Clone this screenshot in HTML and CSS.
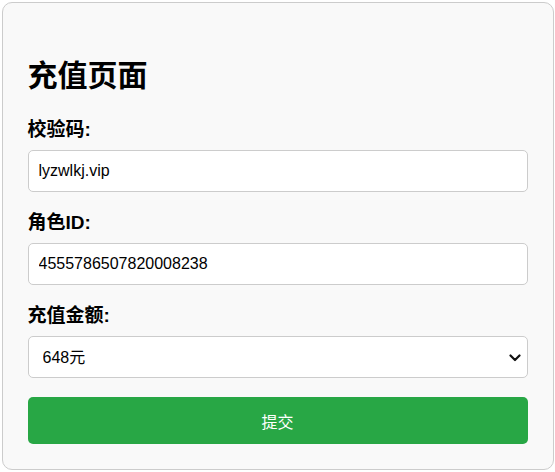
FILE: index.html
```html
<!DOCTYPE html>
<html lang="zh">
<head>
<meta charset="utf-8">
<title>充值页面</title>
<link rel="stylesheet" href="styles.css">
</head>
<body>
<div class="card">
  <h2 class="title">充值页面</h2>
  <form class="form">
    <div class="group">
      <label class="label" for="code">校验码:</label>
      <input class="field" id="code" type="text" value="lyzwlkj.vip">
    </div>
    <div class="group">
      <label class="label" for="role">角色ID:</label>
      <input class="field" id="role" type="text" value="4555786507820008238">
    </div>
    <div class="group">
      <label class="label" for="amount">充值金额:</label>
      <div class="select-wrap">
        <select class="field select" id="amount">
          <option>648元</option>
        </select>
        <svg class="chevron" width="12" height="8" viewBox="0 0 12 8"><path d="M1.5 1.5 L6 6 L10.5 1.5" fill="none" stroke="#111" stroke-width="2.2" stroke-linecap="round" stroke-linejoin="round"/></svg>
      </div>
    </div>
    <button class="submit" type="button">提交</button>
  </form>
</div>
</body>
</html>
```
FILE: styles.css
```css
html, body {
  margin: 0;
  padding: 0;
  background: #fff;
}
body {
  font-family: "Liberation Sans", Arial, "Noto Sans CJK SC", sans-serif;
  color: #000;
  padding-top: 2px;
}
.card {
  width: 500px;
  margin: 0 auto;
  padding: 25px;
  border: 1px solid #ccc;
  border-radius: 10px;
  background: #f9f9f9;
}
.title {
  font-family: "Noto Sans CJK SC", sans-serif;
  font-size: 30px;
  font-weight: 700;
  line-height: 40px;
  margin: 25px 0 24px;
}
.form {
  display: flex;
  flex-direction: column;
}
.group {
  display: flex;
  flex-direction: column;
  margin-bottom: 18px;
}
.label {
  font-family: "Liberation Sans", Arial, "Noto Sans CJK SC", sans-serif;
  font-size: 19px;
  font-weight: 700;
  line-height: 26px;
  margin-bottom: 7px;
}
.field {
  box-sizing: border-box;
  width: 100%;
  height: 42px;
  padding: 0 10px;
  border: 1px solid #ccc;
  border-radius: 5px;
  background: #fff;
  font-family: "Liberation Sans", Arial, "Noto Sans CJK SC", sans-serif;
  font-size: 16px;
  color: #000;
  margin: 0;
}
.select-wrap {
  position: relative;
}
.select {
  appearance: none;
  -webkit-appearance: none;
  padding-left: 14px;
}
.chevron {
  position: absolute;
  right: 7px;
  top: 18px;
  pointer-events: none;
}
.submit {
  box-sizing: border-box;
  width: 100%;
  height: 47px;
  margin-top: 1px;
  border: none;
  border-radius: 5px;
  background: #28a745;
  color: #fff;
  font-family: "Liberation Sans", Arial, "Noto Sans CJK SC", sans-serif;
  font-size: 16px;
}
```
